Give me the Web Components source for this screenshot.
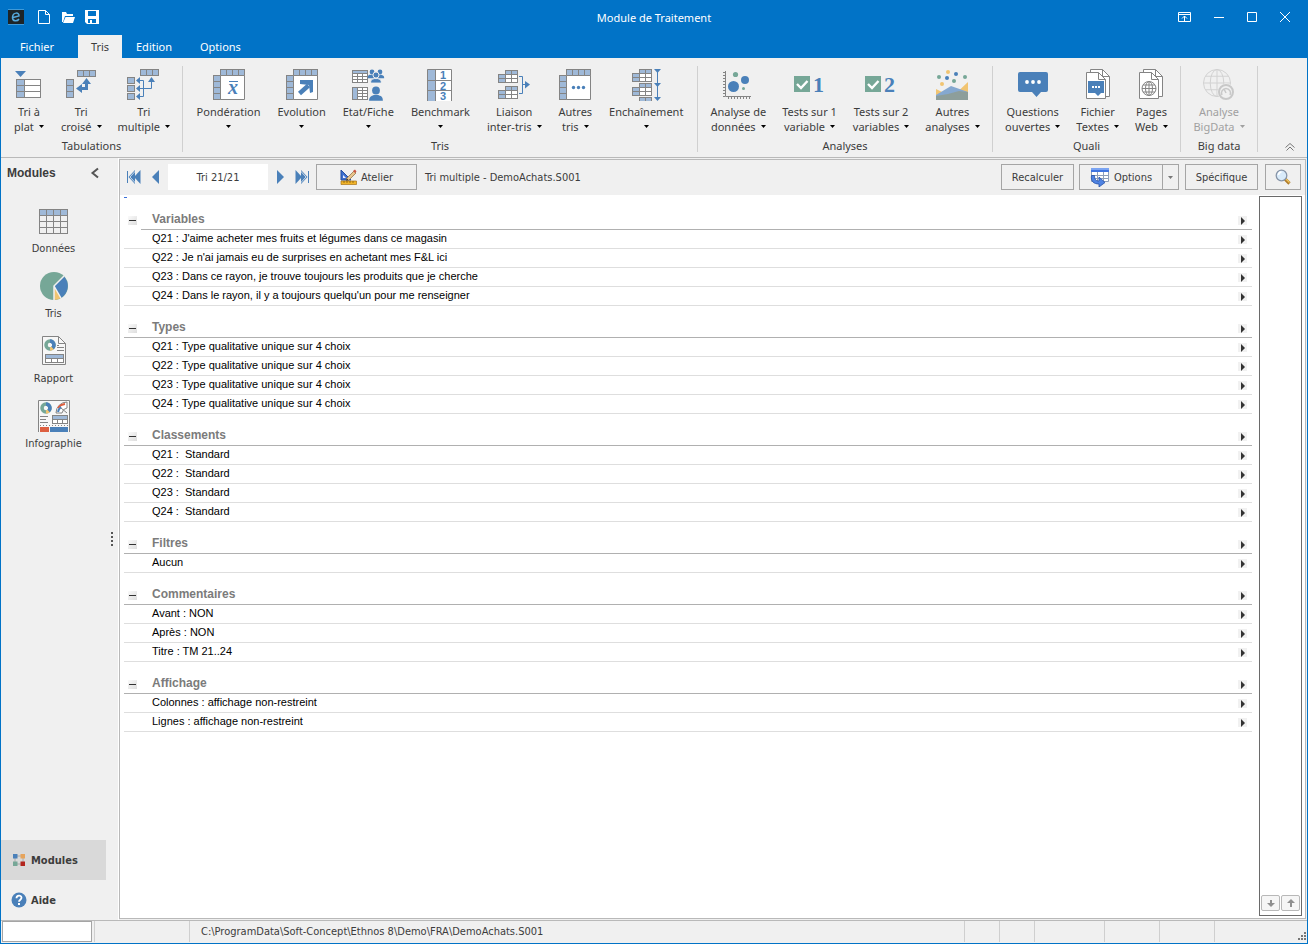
<!DOCTYPE html>
<html lang="fr">
<head>
<meta charset="utf-8">
<title>Module de Traitement</title>
<style>
  :root {
    --blue: #0173c7;
    --face: #f0f0f0;
    --line: #b9b9b9;
    --edge: #a5a5a5;
    --ink: #3c3c3c;
    --segoe: "Noto Sans", "Open Sans", sans-serif;
    --tahoma: "DejaVu Sans Condensed", "DejaVu Sans", sans-serif;
    --arial: "Liberation Sans", Arial, sans-serif;
  }
  html, body { height: 100%; margin: 0; }
  body { font: 11px/15px var(--segoe); color: var(--ink); }
</style>
</head>
<body>
<app-window></app-window>
<script>
const G = '#848484', B = '#4a80b9', L = '#9fb9d8', V = '#76a797', Y = '#f1c471';

/* Grid of cells: x, y, column width, row height, columns, rows, fill */
function grid(x, y, cw, rh, cols, rows, fill) {
  let d = '';
  for (let i = 0; i <= cols; i++) d += `M${x + i * cw + .5} ${y}v${rows * rh + 1}`;
  for (let j = 0; j <= rows; j++) d += `M${x} ${y + j * rh + .5}h${cols * cw + 1}`;
  return `<rect x="${x}" y="${y}" width="${cols * cw}" height="${rows * rh}" fill="${fill}"/><path d="${d}" stroke="${G}" fill="none"/>`;
}
const frame = grid(7, 0, 6, 6, 4, 1, L) + grid(0, 6, 7, 6, 1, 4, L) + `<path d="M7.500 6.500h24v24h-24z" fill="#fff" stroke="${G}"/>`;
const mini = (x, y) => grid(x, y + 4, 7, 4, 1, 2, L) + grid(x + 7, y, 6, 4, 2, 1, L) + grid(x + 7, y + 4, 6, 4, 2, 2, '#fff');
const pages = `<path d="M8.500 .500h12l7 7v20h-19z" fill="#fff" stroke="${G}"/><path d="M20.500 .500v7h7" fill="none" stroke="${G}"/><path d="M4.500 3.500h12l7 7v19h-19z" fill="#fff" stroke="${G}"/><path d="M16.500 3.500v7h7" fill="none" stroke="${G}"/>`;
const globe = (cx, cy, r, c) => `<g fill="none" stroke="${c}"><circle cx="${cx}" cy="${cy}" r="${r}"/><ellipse cx="${cx}" cy="${cy}" rx="${r / 2}" ry="${r}"/><path d="M${cx} ${cy - r}v${2 * r}M${cx - r} ${cy}h${2 * r}M${cx - r * .86} ${cy - r / 2}h${r * 1.72}M${cx - r * .86} ${cy + r / 2}h${r * 1.72}"/></g>`;
const check = `<path d="M0 7h16v16H0z" fill="${V}"/><path d="M3 15l4 4 6.500-7" fill="none" stroke="#fff" stroke-width="2.400"/>`;
const digit = n => `<text x="19" y="23" font-family="Liberation Serif,serif" font-weight="bold" font-size="22" fill="${B}">${n}</text>`;
const head = (x, y, s) => `<circle cx="${x}" cy="${y}" r="${3.4 * s}"/><path d="M${x - 6 * s} ${y + 9 * s}c0-4 ${2 * s}-${4 * s} ${4 * s}-${5 * s}h${4 * s}c${2 * s} ${s} ${4 * s} ${s} ${4 * s} ${5 * s}z"/>`;
const donut = (x, y) => `<g fill="none" stroke-width="3.500"><circle cx="${x}" cy="${y}" r="4" stroke="${V}"/><path d="M${x} ${y - 4}a4 4 0 0 1 2.500 7" stroke="${B}"/><path d="M${x + 2.5} ${y + 3}a4 4 0 0 1-2.500 1" stroke="${Y}"/></g>`;

const ICONS = {
  plat: [32, 32, `<path d="M2 2h11l-5.500 6z" fill="${B}"/>` + grid(3, 10, 8, 6, 1, 3, L) + grid(11, 10, 16, 6, 1, 3, '#fff')],
  croise: [32, 32, grid(12, 1, 6, 6, 3, 1, L) + grid(1, 10, 7, 6, 1, 3, L) + `<path d="M21.500 14v5.500H16" fill="none" stroke="${B}" stroke-width="3"/><path d="M17 15l4.500-6 4.500 6zM17 15v9l-6-4.500z" fill="${B}"/>`],
  multiple: [33, 32, grid(13, 0, 6, 6, 3, 1, L) + grid(0, 8, 7, 6, 1, 1, L) + grid(0, 16, 7, 6, 1, 1, L) + grid(0, 24, 7, 6, 1, 1, L) + `<path d="M12 11.500h4.500v16H12M12 19.500h12.500V12" fill="none" stroke="${B}"/><path d="M13 8v7l-4-3.500zM13 16v7l-4-3.500zM13 24v7l-4-3.500zM21 13h7l-3.500-5z" fill="${B}"/>`],
  ponderation: [32, 32, frame + `<text x="15" y="25" font-family="Liberation Serif,serif" font-style="italic" font-weight="bold" font-size="20" fill="${B}">x</text><path d="M16 12.500h9" stroke="${B}"/>`],
  evolution: [32, 32, frame + `<path d="M13.500 24.500l9-8" stroke="${B}" stroke-width="4.500"/><path d="M14 11h13v12l-3 1-1-8-9-1z" fill="${B}"/>`],
  etat: [33, 32, grid(0, 1, 5, 3, 3, 4, '#fff') + `<path d="M1 2h14v2H1z" fill="${L}"/>` + grid(0, 18, 5, 3, 3, 4, '#fff') + `<path d="M1 19h4v11H1z" fill="${L}"/><g fill="${B}">` + head(20, 3, .7) + head(28, 3, .7) + `<g stroke="#f0f0f0">` + head(24, 6, .9) + `</g>` + head(24, 21.500, 1.150) + `</g>`],
  benchmark: [32, 32, `<path d="M3.500 0h24v32h-24z" fill="#fff"/><path d="M3.500 0h8v32h-8z" fill="${L}"/><path d="M3.500 32V.500h24V32M11.500 0v32M3 11.500h25M3 21.500h25" fill="none" stroke="${G}"/><g font-family="Liberation Sans,sans-serif" font-weight="bold" font-size="11" fill="${B}"><text x="16" y="10">1</text><text x="16" y="21">2</text><text x="16" y="31">3</text></g>`],
  liaison: [32, 32, mini(0, 1) + mini(0, 17) + `<path d="M21 7.500h3.500v17H21M24 15.500h4" fill="none" stroke="${B}"/><path d="M27 12v7.500l5-4z" fill="${B}"/>`],
  autres: [32, 32, frame + `<g fill="${B}"><circle cx="14.500" cy="18.500" r="1.700"/><circle cx="19.500" cy="18.500" r="1.700"/><circle cx="24.500" cy="18.500" r="1.700"/></g>`],
  enchainement: [32, 32, mini(2, 0) + mini(2, 14) + grid(9, 28, 6, 4, 2, 1, L) + `<path d="M27.500 1v29" stroke="${B}"/><path d="M24 0h7l-3.500 4zM24 14h7l-3.500 4zM24 28h7l-3.500 4z" fill="${B}"/>`],
  donnees: [32, 32, `<path d="M3.500 2v25.500H29M1 3.500h2M1 6.500h2M1 9.500h2M1 12.500h2M1 15.500h2M1 18.500h2M1 21.500h2M1 24.500h2M1 27.500h2M6.500 27v3M9.500 27v3M12.500 27v3M15.500 27v3M18.500 27v3M21.500 27v3M24.500 27v3M27.500 27v3" stroke="${G}" fill="none"/><g fill="${B}"><circle cx="11.500" cy="17.500" r="5.500"/><circle cx="23" cy="11" r="4"/></g><g fill="${V}"><circle cx="13.500" cy="5.500" r="2.600"/><circle cx="21.500" cy="19.500" r="1.500"/></g>`],
  test1: [32, 32, check + digit(1)],
  test2: [32, 32, check + digit(2)],
  analyses: [32, 32, `<path d="M0 20l16 8 16-15v18H0z" fill="${Y}"/><path d="M0 26l15-9 17 6v8H0z" fill="#85a8d0"/><path d="M0 27l12-2 11-3 9 1v8H0z" fill="#8d9e9b"/><g fill="${Y}"><circle cx="12" cy="3" r="2"/><circle cx="6" cy="15" r="2"/></g><g fill="${B}"><circle cx="20" cy="5" r="2"/><circle cx="11" cy="9" r="2"/></g><g fill="${V}"><circle cx="3" cy="8" r="2"/><circle cx="18" cy="12" r="2"/><circle cx="29" cy="8" r="2"/></g>`],
  questions: [32, 32, `<path d="M3 3h26q2 0 2 2v16q0 2-2 2h-5l-4.500 5-4.500-5H3q-2 0-2-2V5q0-2 2-2z" fill="${B}"/><g fill="#fff"><circle cx="10" cy="13" r="1.900"/><circle cx="16" cy="13" r="1.900"/><circle cx="22" cy="13" r="1.900"/></g>`],
  textes: [32, 32, pages + `<path d="M6 12h16v12h-3l-3 3-3-3H6z" fill="${B}"/><path d="M10 17h2v2h-2zM13 17h2v2h-2zM16 17h2v2h-2z" fill="#fff"/>`],
  web: [32, 32, pages + globe(14, 19.5, 7, G)],
  bigdata: [33, 32, globe(15, 14, 13.5, '#d2d2d2') + `<circle cx="24" cy="23" r="8.500" fill="#f0f0f0"/><circle cx="24" cy="23" r="7" fill="none" stroke="#c8c8c8" stroke-width="2"/><path d="M20 26a4.500 4.500 0 1 1 8 0M24 24l-2-4" fill="none" stroke="#c8c8c8" stroke-width="1.500"/>`],
  grille: [30, 32, grid(0, 4, 7, 6, 4, 4, 'none') + `<path d="M1 5h6v5H1zM8 5h6v5H8zM15 5h6v5h-6zM22 5h6v5h-6z" fill="${L}"/>`],
  camembert: [30, 32, `<circle cx="15" cy="16" r="14" fill="${V}"/><path d="M15 16L24.500 6A14 14 0 0 1 22 28z" fill="${B}"/><path d="M15 16l7 12a14 14 0 0 1-7 2z" fill="${Y}"/><path d="M15 30V16L25 6M15 16l7.500 13" fill="none" stroke="#f0f0f0" stroke-width="1.500"/>`],
  rapport: [30, 32, `<path d="M3.500 1.500h16l7 7v21h-23z" fill="#f7f7f7" stroke="${G}"/><path d="M19.500 1.500v7h7M20 10.500h-2M18 12.500h7M18 15.500h7M15 23" fill="none" stroke="${G}"/>` + donut(11, 10) + grid(6, 19, 6, 4, 3, 2, '#fff') + `<path d="M7 20h17v3H7z" fill="${L}"/>`],
  infographie: [32, 32, `<path d="M.500 32V.500h31V32" fill="#f7f7f7" stroke="${G}"/>` + donut(8, 8) + `<path d="M18 13A11 11 0 0 1 29 2v6a6 6 0 0 0-5 5zM23 8l6 5" fill="#fff" stroke="${G}"/><path d="M20 8a10 10 0 0 1 7-4" stroke="#dd5f40" stroke-width="2" fill="none"/><path d="M20 12a8 8 0 0 1 3-5" stroke="${B}" stroke-width="2" fill="none"/><path d="M2 16.500h8M2 19.500h6M2 22.500h8" stroke="${G}"/><path d="M2 25.500h28" stroke="${G}" stroke-dasharray="1 2"/>` + grid(14, 15, 5, 4, 3, 2, '#fff') + `<path d="M15 16h14v3H15z" fill="${L}"/><path d="M2 27h9v5H2z" fill="#dd5f40"/><path d="M12 27h18v5H12z" fill="${B}"/>`],
  modules: [12, 12, `<path d="M2 2h8v8H2z" fill="none" stroke="#aaa"/><path d="M0 0h4.500v4.500H0z" fill="${B}"/><path d="M7.500 0H12v4.500H7.500z" fill="#e6a45c"/><path d="M0 7.500h4.500V12H0z" fill="${V}"/><path d="M7.500 7.500H12V12H7.500z" fill="#b3261e"/>`],
  aide: [16, 16, `<circle cx="8" cy="8" r="7.500" fill="${B}"/><path d="M5.500 6.200c0-3.400 5-3.400 5-.400 0 2-2.500 1.800-2.500 4" fill="none" stroke="#fff" stroke-width="1.800"/><path d="M7 11h2v2H7z" fill="#fff"/>`],
  logo: [16, 16, `<path d="M0 0h16v16H0z" fill="#1d2427"/><path d="M0 .500h16M0 15.500h16" stroke="#3f9ad8"/><path d="M5 8.500l6-1.500c.500-4-6-4-6.500 1-.300 5 5 4.500 6.500 2" fill="none" stroke="#55a9dc" stroke-width="1.500"/>`],
  nouveau: [14, 16, `<path d="M1.500 1.500h7l4 4v9h-11zM8.500 1.500v4h4" fill="none" stroke="#fff"/>`],
  ouvrir: [14, 16, `<path d="M1 3h4l1 2h6v2H4l-2 6H1z" fill="#fff"/><path d="M4.500 8H14l-2 6H2z" fill="#fff"/>`],
  enregistrer: [14, 16, `<path d="M0 1h14v14H2l-2-2zM3 2v5h8V2zM3 10v4h8v-4z" fill="#fff" fill-rule="evenodd"/><path d="M5 11h2v3H5z" fill="#fff"/>`],
  epingle: [14, 12, `<path d="M.500 1.500h12v9H.500zM.500 3.500h12M6.500 10V5M4 7.500l2.500-2.500L9 7.500" fill="none" stroke="#fff"/>`],
  reduire: [12, 12, `<path d="M1 6.500h10" stroke="#fff"/>`],
  agrandir: [12, 12, `<path d="M1.500 1.500h9v9h-9z" fill="none" stroke="#fff"/>`],
  fermer: [12, 12, `<path d="M1 1l10 10M11 1L1 11" stroke="#fff"/>`],
  replier: [12, 12, `<path d="M1.500 6.500l4.500-4 4.500 4M2.500 9.500l3.500-3.500 3.500 3.500" fill="none" stroke="#777"/>`],
  chevron: [10, 12, `<path d="M8 1.500L2.500 6 8 10.500" fill="none" stroke="#555" stroke-width="2"/>`],
  premier: [16, 14, `<path d="M1 1h1v12H1z" fill="${B}"/><path d="M9 0v14L2.500 7z" fill="${B}"/><path d="M14.500 0v14L8 7z" fill="${B}"/><path d="M9.500 1l-5.500 6 5.500 6" fill="none" stroke="#fff" stroke-width=".700"/>`],
  precedent: [10, 14, `<path d="M8 0v14L1 7z" fill="${B}"/>`],
  suivant: [10, 14, `<path d="M2 0v14l7-7z" fill="${B}"/>`],
  dernier: [16, 14, `<path d="M14 1h1v12h-1z" fill="${B}"/><path d="M7 0v14l6.500-7z" fill="${B}"/><path d="M1.500 0v14L8 7z" fill="${B}"/><path d="M6.500 1l5.500 6-5.500 6" fill="none" stroke="#fff" stroke-width=".700"/>`],
  atelier: [17, 16, `<path d="M1 1l10 10H1z" fill="#3d70cf" stroke="#274f9f"/><path d="M3 6l3 3H3z" fill="#eef"/><path d="M6 10l8-8 2 2-7.500 7.500z" fill="#e8c48e" stroke="#8a6a3a" stroke-width=".700"/><path d="M13 2l2-1.500 1.500 2L15 4z" fill="#cc5544"/><path d="M6 12l1-2.500 1.500 1.500z" fill="#333"/><path d="M1 12h15.500v3.500H1z" fill="#f0b429" stroke="#a8741a" stroke-width=".700"/><path d="M4 12v2M7 12v2M10 12v2M13 12v2" stroke="#7a5210" stroke-width=".700"/>`],
  tableau: [20, 20, `<path d="M1.500 1.500h17v13h-17z" fill="#fff" stroke="#8f9fb8"/><path d="M1 1h18v4H1z" fill="#3f74e0"/><path d="M1 1h18v2H1z" fill="#7ba4f2"/><path d="M1 8.500h18M1 11.500h18M7.500 5v10M13.500 5v10" stroke="#8f9fb8"/><path d="M1.500 8.500c0 0 3 0 3 0 0 4 1.500 5.500 4.500 5.500v-4l6 5.500-6 4.500v-3C4 17 .500 14.500 1.500 8.500z" fill="#4f83e2" stroke="#2450a8" stroke-width=".800"/>`],
  loupe: [16, 16, `<path d="M10 10l4.500 4.500" stroke="#b07d2c" stroke-width="3.200"/><path d="M10.500 9.500l4 4" stroke="#f2c55c" stroke-width="1.300"/><circle cx="6.500" cy="6.500" r="5.300" fill="#d9ebfa" stroke="#8795a8" stroke-width="1.300"/><path d="M3.500 6a3.200 3.200 0 0 1 3-3" fill="none" stroke="#fff" stroke-width="1.500"/>`],
  bas: [8, 8, `<path d="M3 1h2v3h3L4 8 0 4h3z" fill="#909090"/>`],
  haut: [8, 8, `<path d="M3 8h2V4h3L4 0 0 4h3z" fill="#909090"/>`],
  tri: [5, 3, `<path d="M0 0h5L2.500 3z" fill="currentColor"/>`],
  poignee: [10, 10, `<path d="M7 0h2v2H7zM7 3h2v2H7zM4 3h2v2H4zM7 6h2v2H7zM4 6h2v2H4zM1 6h2v2H1z" fill="#777"/>`],
};

/* Base class: fills an open shadow root from css() and html() */
class Part extends HTMLElement {
  connectedCallback() {
    if (this.shadowRoot) return;
    const t = document.createElement('template');
    t.innerHTML = `<style>*{box-sizing:border-box}button{font:inherit;color:inherit;border:0;background:none;padding:0;margin:0}a{color:inherit;text-decoration:none}${this.css()}</style>${this.html()}`;
    this.attachShadow({ mode: 'open' }).append(t.content.cloneNode(true));
  }
  a(n) { return this.getAttribute(n) || ''; }
}

customElements.define('ui-icon', class extends Part {
  css() { return ':host{display:inline-block;line-height:0;flex:none}svg{display:block}'; }
  html() {
    const [w, h, body] = ICONS[this.a('name')];
    return `<svg width="${w}" height="${h}" viewBox="0 0 ${w} ${h}" aria-hidden="true">${body}</svg>`;
  }
});

customElements.define('title-bar', class extends Part {
  css() { return `
    :host{display:grid;grid-template-columns:1fr auto 1fr;align-items:center;height:34px;background:var(--blue);color:#fff}
    .quick,.win{display:flex;align-items:center}
    .quick{gap:10px;padding-left:7px}
    .quick ui-icon[name=logo]{margin-right:3px}
    .win{justify-content:flex-end;gap:21px;padding-right:16px}
    button{display:flex}
    h1{margin:0;font:inherit}`; }
  html() { return `
    <div class="quick"><ui-icon name="logo"></ui-icon>
      <button aria-label="Nouveau"><ui-icon name="nouveau"></ui-icon></button><button aria-label="Ouvrir"><ui-icon name="ouvrir"></ui-icon></button><button aria-label="Enregistrer"><ui-icon name="enregistrer"></ui-icon></button></div>
    <h1>Module de Traitement</h1>
    <div class="win"><button aria-label="Afficher le ruban"><ui-icon name="epingle"></ui-icon></button><button aria-label="Réduire"><ui-icon name="reduire"></ui-icon></button><button aria-label="Agrandir"><ui-icon name="agrandir"></ui-icon></button><button aria-label="Fermer"><ui-icon name="fermer"></ui-icon></button></div>`; }
});

customElements.define('ribbon-tabs', class extends Part {
  css() { return `
    :host{display:flex;height:24px;padding-left:6px;background:var(--blue);color:#fff}
    button{padding:0 14px;margin-top:1px}
    .file{width:60px;margin-right:11px;padding:0}
    .on{width:44px;padding:0;background:var(--face);color:var(--ink)}`; }
  html() { return `<button class="file">Fichier</button><button class="on">Tris</button><button>Edition</button><button>Options</button>`; }
});

customElements.define('ribbon-item', class extends Part {
  css() { return `
    :host{display:block;flex:none}
    button{display:flex;flex-direction:column;align-items:center;padding:0 8px;text-align:center;white-space:nowrap}
    ui-icon[name]{margin-bottom:3px}
    .row{display:flex;align-items:center;gap:5px;height:15px}
    .row ui-icon[name]{margin:0;color:#000}
    button:disabled{color:#a0a0a0}
    button:disabled .row ui-icon[name]{color:#a0a0a0}`; }
  html() {
    const second = this.a('second');
    return `<button ${this.hasAttribute('disabled') ? 'disabled' : ''}><ui-icon name="${this.a('icon')}"></ui-icon><span><slot></slot></span><span class="row">${second ? `<span>${second}</span>` : ''}<ui-icon name="tri"></ui-icon></span></button>`;
  }
});

customElements.define('ribbon-group', class extends Part {
  css() { return `
    :host{display:flex;flex-direction:column;align-items:center;flex:none;border-right:1px solid #d0d0d0;height:86px}
    .items{display:flex;justify-content:center;gap:var(--gap,0)}
    .name{margin-top:4px}`; }
  html() { return `<div class="items"><slot></slot></div><div class="name">${this.a('label')}</div>`; }
});

customElements.define('ribbon-bar', class extends Part {
  css() { return `
    :host{display:flex;height:100px;padding-top:8px;background:var(--face);border-bottom:1px solid var(--line)}
    ribbon-group{padding-top:3px}
    .fold{margin:75px 11px 0 auto;align-self:flex-start}
    .g1{width:182px}.g2{width:515px;--gap:1px}.g3{width:295px}.g4{width:188px}.g5{width:77px}`; }
  html() { return `
    <ribbon-group class="g1" label="Tabulations"><ribbon-item icon="plat" second="plat">Tri à</ribbon-item><ribbon-item icon="croise" second="croisé">Tri</ribbon-item><ribbon-item icon="multiple" second="multiple">Tri</ribbon-item></ribbon-group>
    <ribbon-group class="g2" label="Tris"><ribbon-item icon="ponderation">Pondération</ribbon-item><ribbon-item icon="evolution">Evolution</ribbon-item><ribbon-item icon="etat">Etat/Fiche</ribbon-item><ribbon-item icon="benchmark">Benchmark</ribbon-item><ribbon-item icon="liaison" second="inter-tris">Liaison</ribbon-item><ribbon-item icon="autres" second="tris">Autres</ribbon-item><ribbon-item icon="enchainement">Enchaînement</ribbon-item></ribbon-group>
    <ribbon-group class="g3" label="Analyses"><ribbon-item icon="donnees" second="données">Analyse de</ribbon-item><ribbon-item icon="test1" second="variable">Tests sur 1</ribbon-item><ribbon-item icon="test2" second="variables">Tests sur 2</ribbon-item><ribbon-item icon="analyses" second="analyses">Autres</ribbon-item></ribbon-group>
    <ribbon-group class="g4" label="Quali"><ribbon-item icon="questions" second="ouvertes">Questions</ribbon-item><ribbon-item icon="textes" second="Textes">Fichier</ribbon-item><ribbon-item icon="web" second="Web">Pages</ribbon-item></ribbon-group>
    <ribbon-group class="g5" label="Big data"><ribbon-item icon="bigdata" second="BigData" disabled>Analyse</ribbon-item></ribbon-group>
    <button class="fold" aria-label="Replier le ruban"><ui-icon name="replier"></ui-icon></button>`; }
});

customElements.define('module-link', class extends Part {
  css() { return `
    :host{display:block;height:65px}
    a{display:flex;flex-direction:column;align-items:center;gap:4px}`; }
  html() { return `<a href="#"><ui-icon name="${this.a('icon')}"></ui-icon><span><slot></slot></span></a>`; }
});

customElements.define('module-pane', class extends Part {
  css() { return `
    :host{display:grid;grid-template-columns:105px 12px;background:var(--face);border-right:1px solid #fff;font-family:var(--tahoma)}
    .col{display:flex;flex-direction:column}
    header{display:flex;justify-content:space-between;align-items:center;height:30px;padding:0 6px}
    h2{margin:0;font:bold 12px/15px var(--arial)}
    header button{display:flex}
    nav{padding-top:17px;flex:1}
    .foot{display:flex;align-items:center;gap:4px;height:40px;padding-left:10px;font-weight:bold}
    .foot ui-icon{width:16px;display:flex;justify-content:center}
    .on{background:#d9d9d9}
    .grip{align-self:center;justify-self:center;width:2px;height:14px;background:repeating-linear-gradient(#555 0 2px,transparent 2px 4px)}`; }
  html() { return `
    <div class="col"><header><h2>Modules</h2><button aria-label="Réduire le volet"><ui-icon name="chevron"></ui-icon></button></header>
    <nav><module-link icon="grille">Données</module-link><module-link icon="camembert">Tris</module-link><module-link icon="rapport">Rapport</module-link><module-link icon="infographie">Infographie</module-link></nav>
    <button class="foot on"><ui-icon name="modules"></ui-icon>Modules</button><button class="foot"><ui-icon name="aide"></ui-icon>Aide</button></div>
    <div class="grip"></div>`; }
});

customElements.define('sort-toolbar', class extends Part {
  css() { return `
    :host{display:flex;align-items:center;height:35px;padding:0 4px 1px 6px;box-sizing:border-box;background:var(--face);font-family:var(--tahoma)}
    button{display:flex;align-items:center;justify-content:center;height:26px}
    input{width:100px;height:26px;margin:0 7px;padding:0;border:0;background:#fff;text-align:center;font:inherit;color:inherit}
    .box{border:1px solid var(--edge);gap:4px}
    .atelier{width:101px;margin:0 8px 0 6px}
    .gap{margin-right:9px}
    .sp{flex:1}
    .w73{width:73px}
    .opt{width:84px;margin-left:5px}
    .drop{width:16px;border-left:0;margin-right:6px;color:#777}
    .find{width:36px;margin-left:7px}`; }
  html() { return `
    <button class="gap" aria-label="Premier tri"><ui-icon name="premier"></ui-icon></button><button aria-label="Tri précédent"><ui-icon name="precedent"></ui-icon></button>
    <input aria-label="Position du tri" value="Tri 21/21">
    <button class="gap" aria-label="Tri suivant"><ui-icon name="suivant"></ui-icon></button><button aria-label="Dernier tri"><ui-icon name="dernier"></ui-icon></button>
    <button class="box atelier"><ui-icon name="atelier"></ui-icon>Atelier</button><span>Tri multiple - DemoAchats.S001</span><span class="sp"></span>
    <button class="box w73">Recalculer</button><button class="box opt"><ui-icon name="tableau"></ui-icon>Options</button><button class="box drop" aria-label="Plus d'options"><ui-icon name="tri"></ui-icon></button><button class="box w73">Spécifique</button><button class="box find" aria-label="Rechercher"><ui-icon name="loupe"></ui-icon></button>`; }
});

customElements.define('detail-section', class extends Part {
  css() { return `
    :host{display:block;margin-bottom:13px;font-family:var(--arial);color:#000}
    h3,li{display:flex;align-items:center;height:19px;margin:0;font-weight:normal;border-bottom:1px solid #dedede;padding:0 5px 2px 28px;white-space:pre}
    h3{font-size:12px;font-weight:bold;color:#7b7b7b;border-color:#b0b0b0;padding-left:4px}
    :host([first]) h3{border-image:linear-gradient(90deg,transparent 18px,#b0b0b0 18px) 1}
    ul{list-style:none;margin:0;padding:0}
    h3 span,li span{flex:1}
    button{width:9px;height:9px;margin-top:3px;background:linear-gradient(135deg,#fafafa,#ddd)}
    .min{display:flex;align-items:center;justify-content:center;margin-right:15px}
    .min::before{content:"";width:7px;height:1px;background:#333}
    .go{display:flex;align-items:center;justify-content:center;background:#f1f1f1}
    .go::before{content:"";border:4px solid transparent;border-left-color:#333;border-right:0}`; }
  html() {
    const go = '<button class="go" aria-label="Modifier"></button>';
    return `<h3><button class="min" aria-label="Replier"></button><span>${this.a('label')}</span>${go}</h3><ul>${this.a('rows').split('|').map(r => `<li><span>${r}</span>${go}</li>`).join('')}</ul>`;
  }
});

customElements.define('side-strip', class extends Part {
  css() { return `
    :host{display:flex;align-items:flex-end;gap:1px;width:43px;box-sizing:border-box;border:1px solid #6a6a6a;padding:0 1px 4px;background:#fff}
    button{display:flex;align-items:center;justify-content:center;flex:1;height:16px;border:1px solid #b8b8b8;border-radius:2px;background:#f6f6f6}`; }
  html() { return `<button aria-label="Descendre"><ui-icon name="bas"></ui-icon></button><button aria-label="Monter"><ui-icon name="haut"></ui-icon></button>`; }
});

customElements.define('sort-view', class extends Part {
  css() { return `
    :host{display:flex;flex-direction:column;flex:1;border:1px solid var(--line);margin:1px 1px 1px 0;background:#fff}
    .body{display:flex;flex:1;gap:7px;padding:1px 3px 2px 4px}
    main{flex:1;padding-top:1px}
    .mark{width:3px;height:1px;background:#3a6fd8;margin-bottom:13px}`; }
  html() { return `
    <sort-toolbar></sort-toolbar>
    <div class="body"><main><div class="mark"></div>
      <detail-section first label="Variables" rows="Q21 : J'aime acheter mes fruits et légumes dans ce magasin|Q22 : Je n'ai jamais eu de surprises en achetant mes F&amp;L ici|Q23 : Dans ce rayon, je trouve toujours les produits que je cherche|Q24 : Dans le rayon, il y a toujours quelqu'un pour me renseigner"></detail-section>
      <detail-section label="Types" rows="Q21 : Type qualitative unique sur 4 choix|Q22 : Type qualitative unique sur 4 choix|Q23 : Type qualitative unique sur 4 choix|Q24 : Type qualitative unique sur 4 choix"></detail-section>
      <detail-section label="Classements" rows="Q21 :  Standard|Q22 :  Standard|Q23 :  Standard|Q24 :  Standard"></detail-section>
      <detail-section label="Filtres" rows="Aucun"></detail-section>
      <detail-section label="Commentaires" rows="Avant : NON|Après : NON|Titre : TM 21..24"></detail-section>
      <detail-section label="Affichage" rows="Colonnes : affichage non-restreint|Lignes : affichage non-restreint"></detail-section>
    </main><side-strip></side-strip></div>`; }
});

customElements.define('status-bar', class extends Part {
  css() { return `
    :host{display:flex;height:23px;box-sizing:border-box;padding:0 0 1px 1px;background:var(--face);border-top:1px solid var(--line);font-family:var(--tahoma)}
    input{width:90px;border:1px solid var(--edge);background:#fff;margin-right:2px;padding:0 3px;font:inherit}
    span{border-left:1px solid #cfcfcf;display:flex;align-items:center}
    .path{flex:1;padding-left:11px}
    .a{width:95px}.b{width:35px}.c{width:70px}.d{width:55px}
    .last{width:93px;justify-content:flex-end;align-items:flex-end}`; }
  html() { return `<input aria-label="Commande"><span class="a"></span><span class="path">C:\\ProgramData\\Soft-Concept\\Ethnos 8\\Demo\\FRA\\DemoAchats.S001</span><span class="b"></span><span class="b"></span><span class="c"></span><span class="d"></span><span class="d"></span><span class="last"><ui-icon name="poignee"></ui-icon></span>`; }
});

customElements.define('app-window', class extends Part {
  css() { return `
    :host{display:flex;flex-direction:column;min-height:100vh;box-sizing:border-box;border:1px solid var(--blue);border-top:0;background:var(--face)}
    .mid{display:flex;flex:1}`; }
  html() { return `<title-bar></title-bar><ribbon-tabs></ribbon-tabs><ribbon-bar></ribbon-bar><div class="mid"><module-pane></module-pane><sort-view></sort-view></div><status-bar></status-bar>`; }
});
</script>
</body>
</html>
